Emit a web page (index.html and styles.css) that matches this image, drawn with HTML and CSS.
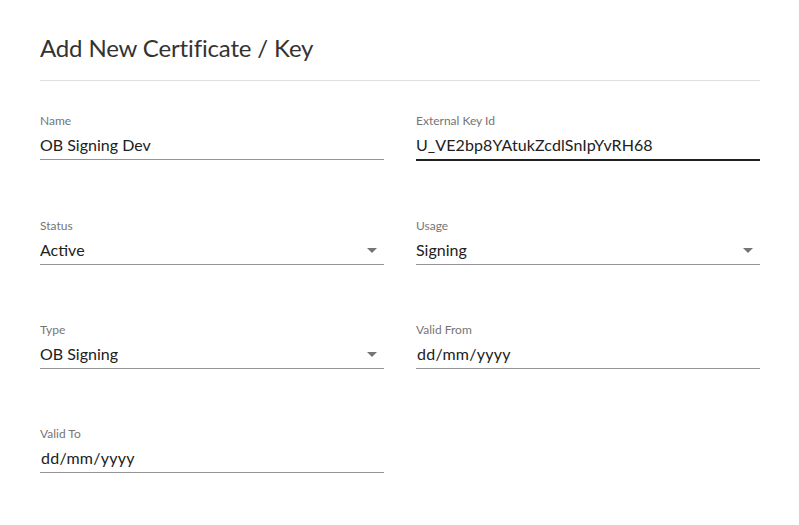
FILE: index.html
```html
<!DOCTYPE html>
<html lang="en">
<head>
<meta charset="utf-8">
<title>Add New Certificate / Key</title>
<link rel="stylesheet" href="styles.css">
</head>
<body>
<div class="dialog">
  <h1 class="title">Add New Certificate / Key</h1>
  <hr class="divider">
  <div class="form">
    <div class="field">
      <div class="label">Name</div>
      <div class="control">OB Signing Dev</div>
    </div>
    <div class="field">
      <div class="label">External Key Id</div>
      <div class="control focused">U_VE2bp8YAtukZcdlSnIpYvRH68</div>
    </div>
    <div class="field">
      <div class="label">Status</div>
      <div class="control select"><span>Active</span><svg class="arrow" width="10" height="5" viewBox="0 0 10 5"><path d="M0 0h10L5 5z"/></svg></div>
    </div>
    <div class="field">
      <div class="label">Usage</div>
      <div class="control select"><span>Signing</span><svg class="arrow" width="10" height="5" viewBox="0 0 10 5"><path d="M0 0h10L5 5z"/></svg></div>
    </div>
    <div class="field">
      <div class="label">Type</div>
      <div class="control select"><span>OB Signing</span><svg class="arrow" width="10" height="5" viewBox="0 0 10 5"><path d="M0 0h10L5 5z"/></svg></div>
    </div>
    <div class="field">
      <div class="label">Valid From</div>
      <div class="control date">dd/mm/yyyy</div>
    </div>
    <div class="field">
      <div class="label">Valid To</div>
      <div class="control date">dd/mm/yyyy</div>
    </div>
  </div>
</div>
</body>
</html>
```
FILE: styles.css
```css
html, body {
  margin: 0;
  padding: 0;
  background: #ffffff;
}
body {
  font-family: Lato, "Open Sans", sans-serif;
  color: rgba(0, 0, 0, 0.87);
}
.dialog {
  padding: 32px 39px 0 40px;
}
.title {
  margin: 0;
  font-size: 24px;
  font-weight: 400;
  line-height: 32px;
  letter-spacing: -0.15px;
  color: #333333;
}
.divider {
  margin: 16px 0 0;
  border: 0;
  border-top: 1px solid #e0e0e0;
  height: 0;
}
.form {
  margin-top: 31px;
  display: grid;
  grid-template-columns: 344px 344px;
  column-gap: 32px;
  row-gap: 56px;
  align-items: start;
}
.label {
  font-size: 12px;
  line-height: 16px;
  padding-top: 1px;
  color: #757575;
  margin-bottom: 2px;
}
.control {
  font-size: 16px;
  line-height: 20px;
  padding: 4px 0 4px;
  border-bottom: 1px solid #949494;
  color: #212121;
}
.control.focused {
  border-bottom: 2px solid #212121;
  letter-spacing: 0.1px;
}
.control.date {
  padding-left: 1px;
  letter-spacing: 0.25px;
}
.select {
  display: flex;
  justify-content: space-between;
  align-items: center;
}
.arrow {
  fill: #757575;
  margin-right: 7px;
  margin-top: 1px;
}
```
